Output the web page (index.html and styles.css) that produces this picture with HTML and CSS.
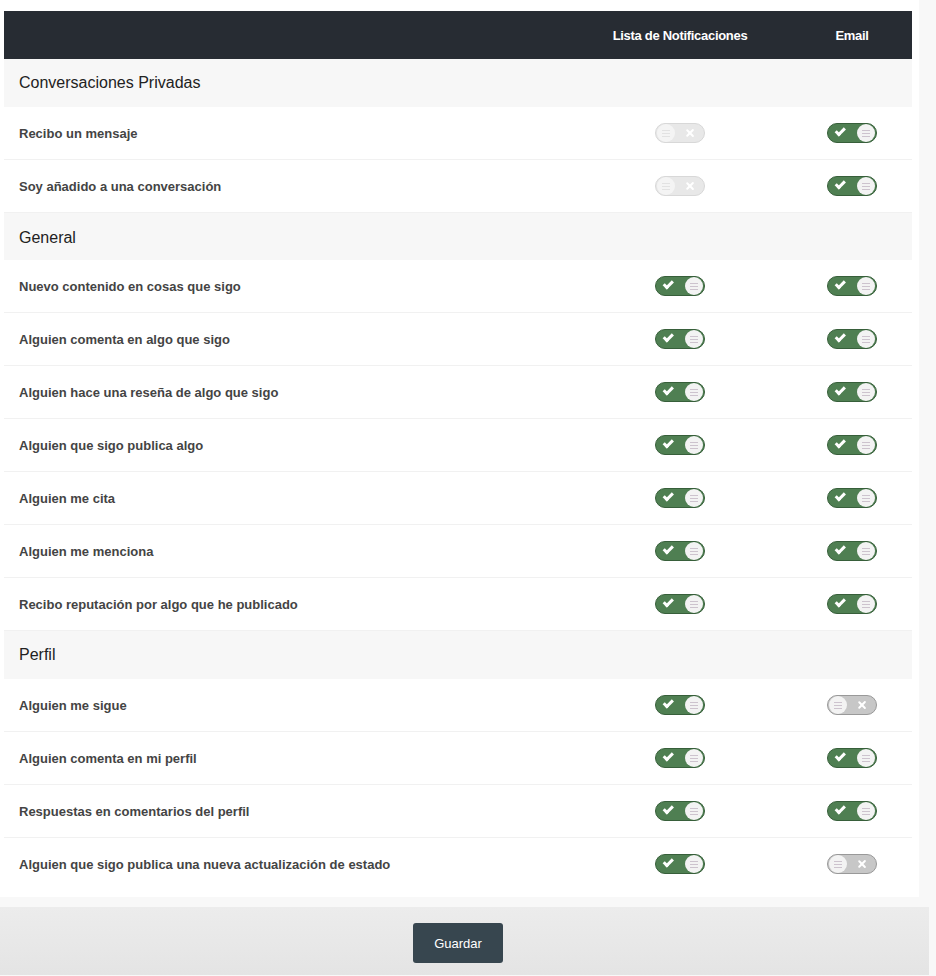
FILE: index.html
```html
<!DOCTYPE html>
<html lang="es">
<head>
    <meta charset="UTF-8">
    <meta name="viewport" content="width=device-width, initial-scale=1.0">
    <title>Preferencias de alertas</title>
    <link rel="stylesheet" href="styles.css">
</head>
<body>
    <!-- Tabla de preferencias -->
    <div class="page">
        <div class="prefs">
            <div class="prefs-head">
                <div></div>
                <div class="col-title">Lista de Notificaciones</div>
                <div class="col-title">Email</div>
            </div>

            <div class="section">Conversaciones Privadas</div>
            <div class="row">
                <div class="label">Recibo un mensaje</div>
                <div class="cell"><span class="toggle off disabled"><span class="knob"><i></i></span><span class="icon-x"></span></span></div>
                <div class="cell"><span class="toggle on"><span class="icon-check"></span><span class="knob"><i></i></span></span></div>
            </div>
            <div class="row">
                <div class="label">Soy añadido a una conversación</div>
                <div class="cell"><span class="toggle off disabled"><span class="knob"><i></i></span><span class="icon-x"></span></span></div>
                <div class="cell"><span class="toggle on"><span class="icon-check"></span><span class="knob"><i></i></span></span></div>
            </div>

            <div class="section short">General</div>
            <div class="row">
                <div class="label">Nuevo contenido en cosas que sigo</div>
                <div class="cell"><span class="toggle on"><span class="icon-check"></span><span class="knob"><i></i></span></span></div>
                <div class="cell"><span class="toggle on"><span class="icon-check"></span><span class="knob"><i></i></span></span></div>
            </div>
            <div class="row">
                <div class="label">Alguien comenta en algo que sigo</div>
                <div class="cell"><span class="toggle on"><span class="icon-check"></span><span class="knob"><i></i></span></span></div>
                <div class="cell"><span class="toggle on"><span class="icon-check"></span><span class="knob"><i></i></span></span></div>
            </div>
            <div class="row">
                <div class="label">Alguien hace una reseña de algo que sigo</div>
                <div class="cell"><span class="toggle on"><span class="icon-check"></span><span class="knob"><i></i></span></span></div>
                <div class="cell"><span class="toggle on"><span class="icon-check"></span><span class="knob"><i></i></span></span></div>
            </div>
            <div class="row">
                <div class="label">Alguien que sigo publica algo</div>
                <div class="cell"><span class="toggle on"><span class="icon-check"></span><span class="knob"><i></i></span></span></div>
                <div class="cell"><span class="toggle on"><span class="icon-check"></span><span class="knob"><i></i></span></span></div>
            </div>
            <div class="row">
                <div class="label">Alguien me cita</div>
                <div class="cell"><span class="toggle on"><span class="icon-check"></span><span class="knob"><i></i></span></span></div>
                <div class="cell"><span class="toggle on"><span class="icon-check"></span><span class="knob"><i></i></span></span></div>
            </div>
            <div class="row">
                <div class="label">Alguien me menciona</div>
                <div class="cell"><span class="toggle on"><span class="icon-check"></span><span class="knob"><i></i></span></span></div>
                <div class="cell"><span class="toggle on"><span class="icon-check"></span><span class="knob"><i></i></span></span></div>
            </div>
            <div class="row">
                <div class="label">Recibo reputación por algo que he publicado</div>
                <div class="cell"><span class="toggle on"><span class="icon-check"></span><span class="knob"><i></i></span></span></div>
                <div class="cell"><span class="toggle on"><span class="icon-check"></span><span class="knob"><i></i></span></span></div>
            </div>

            <div class="section">Perfil</div>
            <div class="row">
                <div class="label">Alguien me sigue</div>
                <div class="cell"><span class="toggle on"><span class="icon-check"></span><span class="knob"><i></i></span></span></div>
                <div class="cell"><span class="toggle off"><span class="knob"><i></i></span><span class="icon-x"></span></span></div>
            </div>
            <div class="row">
                <div class="label">Alguien comenta en mi perfil</div>
                <div class="cell"><span class="toggle on"><span class="icon-check"></span><span class="knob"><i></i></span></span></div>
                <div class="cell"><span class="toggle on"><span class="icon-check"></span><span class="knob"><i></i></span></span></div>
            </div>
            <div class="row">
                <div class="label">Respuestas en comentarios del perfil</div>
                <div class="cell"><span class="toggle on"><span class="icon-check"></span><span class="knob"><i></i></span></span></div>
                <div class="cell"><span class="toggle on"><span class="icon-check"></span><span class="knob"><i></i></span></span></div>
            </div>
            <div class="row last">
                <div class="label">Alguien que sigo publica una nueva actualización de estado</div>
                <div class="cell"><span class="toggle on"><span class="icon-check"></span><span class="knob"><i></i></span></span></div>
                <div class="cell"><span class="toggle off"><span class="knob"><i></i></span><span class="icon-x"></span></span></div>
            </div>
        </div>
    </div>

    <!-- Barra de guardar -->
    <div class="footer">
        <button class="save-btn">Guardar</button>
    </div>
</body>
</html>
```

FILE: styles.css
```css
/* Fondo general */
body {
    margin: 0;
    padding: 0;
    background-color: #f8f8f8;
    font-family: "Liberation Sans", Arial, sans-serif;
    color: #444;
}

/* Contenedor blanco */
.page {
    width: 919px;
    background-color: #fff;
    padding: 11px 7px 7px 4px;
    box-sizing: border-box;
}

/* Cabecera oscura */
.prefs-head {
    display: grid;
    grid-template-columns: 1fr 224px 120px;
    align-items: center;
    height: 48px;
    background-color: #272c33;
}

.col-title {
    color: #fff;
    font-size: 13px;
    font-weight: bold;
    text-align: center;
    letter-spacing: -0.3px;
}

/* Título de sección */
.section {
    height: 48px;
    line-height: 48px;
    padding-left: 15px;
    background-color: #f7f7f7;
    font-size: 16px;
    color: #222;
}

.section.short {
    height: 47px;
    line-height: 49px;
}

/* Fila */
.row {
    display: grid;
    grid-template-columns: 1fr 224px 120px;
    align-items: center;
    height: 52px;
    border-bottom: 1px solid #f1f1f1;
}

.row.last {
    border-bottom: none;
}

.label {
    padding-left: 15px;
    font-size: 13px;
    font-weight: bold;
    color: #444;
}

.cell {
    display: flex;
    justify-content: center;
}

/* Interruptor */
.toggle {
    position: relative;
    display: flex;
    align-items: center;
    justify-content: space-between;
    width: 50px;
    height: 20px;
    padding: 0 1px;
    border-radius: 11px;
    box-sizing: border-box;
}

.toggle.on {
    background-color: #4f7f52;
    border: 1px solid #375f3a;
    padding-left: 10px;
}

.toggle.off {
    background-color: #c7c7c7;
    border: 1px solid #999;
    padding-right: 10px;
}

.toggle.off.disabled {
    background-color: #e8e8e8;
    border-color: #d8d8d8;
}

/* Bolita con rayas */
.knob {
    width: 18px;
    height: 18px;
    border-radius: 50%;
    background-color: #f3f3f3;
    display: flex;
    align-items: center;
    justify-content: center;
}

.knob i {
    display: block;
    width: 8px;
    height: 1px;
    background-color: #cdc3ce;
    box-shadow: 0 -3px 0 #cdc3ce, 0 3px 0 #cdc3ce;
}

.toggle.disabled .knob {
    background-color: #f4f4f4;
}

.toggle.disabled .knob i {
    background-color: #e2e2e2;
    box-shadow: 0 -3px 0 #e2e2e2, 0 3px 0 #e2e2e2;
}

/* Marca de verificación */
.icon-check {
    width: 3px;
    height: 7px;
    border-right: 3px solid #fff;
    border-bottom: 3px solid #fff;
    transform: rotate(45deg) translate(-2px, -1px);
    box-sizing: content-box;
}

/* Cruz */
.icon-x {
    position: relative;
    width: 8px;
    height: 8px;
}

.icon-x::before, .icon-x::after {
    content: '';
    position: absolute;
    left: 3px;
    top: -1px;
    width: 2.4px;
    height: 10px;
    background-color: #fff;
    border-radius: 1px;
    transform: rotate(45deg);
}

.icon-x::after {
    transform: rotate(-45deg);
}

/* Barra inferior */
.footer {
    width: 929px;
    margin-top: 10px;
    height: 68px;
    box-sizing: border-box;
    padding-top: 16px;
    display: flex;
    justify-content: center;
    background: linear-gradient(#ececec, #e4e4e4);
}

.save-btn {
    width: 90px;
    height: 40px;
    background-color: #37464f;
    color: #fff;
    border: none;
    border-radius: 3px;
    font-family: "Liberation Sans", Arial, sans-serif;
    font-size: 13px;
    cursor: pointer;
    margin-left: -13px;
}
```
